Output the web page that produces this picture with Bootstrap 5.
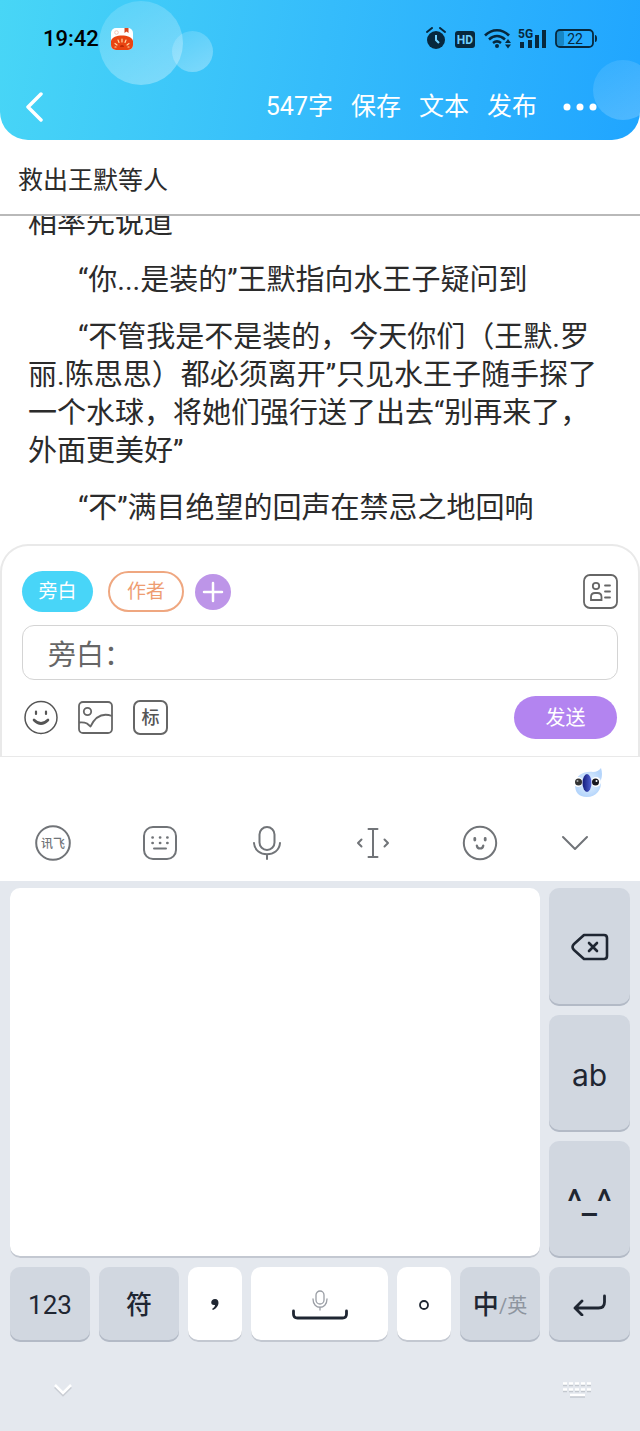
<!DOCTYPE html>
<html lang="zh-CN">
<head>
<meta charset="utf-8">
<meta name="viewport" content="width=device-width, initial-scale=1">
<title>救出王默等人</title>
<link href="https://cdn.jsdelivr.net/npm/bootstrap@5.3.0/dist/css/bootstrap.min.css" rel="stylesheet">
<style>
  body { font-family: Roboto, "Noto Sans CJK SC", sans-serif; color: #2b2b2b; background: #fff; }
  svg { display: block; flex: none; }
  button { padding: 0; border: 0; background: none; color: inherit; }
  .app-header { height: 140px; border-radius: 0 0 28px 28px; background: linear-gradient(100deg, #48d6f6 0%, #35bcfb 50%, #20a5ff 100%); }
  .bubble { position: absolute; border-radius: 50%; background: linear-gradient(150deg, rgba(255,255,255,.12), rgba(255,255,255,.34)); }
  .bubble-lg { width: 84px; height: 84px; left: 99px; top: 1px; }
  .bubble-sm { width: 41px; height: 41px; left: 172px; top: 31px; }
  .bubble-end { width: 60px; height: 60px; right: -13px; top: 60px; background: linear-gradient(150deg, rgba(255,255,255,.08), rgba(255,255,255,.22)); }
  .status-row { height: 78px; padding: 0 42px 0 43px; color: #000; }
  .clock { font-size: 22px; font-weight: 500; line-height: 28px; }
  .nav-row { height: 58px; padding: 0 43px 0 25px; gap: 18px; color: #fff; font-size: 25px; line-height: 36px; }
  .title-input { border: 0; border-bottom: 2px solid #b9b9b9; height: 76px; padding: 2px 19px 0 18px; font-size: 25px; color: #2b2b2b; }
  .story { min-height: 0; padding: 0 28px 17px; font-size: 29px; line-height: 38px; }
  .story p { margin: 19px 0 0; text-indent: 50px; }
  .story .continued { text-indent: 0; }
  .composer { border: 2px solid #e9e9e9; border-bottom-width: 1px; border-radius: 28px 28px 0 0; padding: 25px 20px 17px; }
  .pill { height: 41px; border-radius: 21px; font-size: 19px; line-height: 28px; }
  .pill-narrator { width: 71px; background: #48d5f8; color: #fff; }
  .pill-author { width: 76px; margin: 0 11px 0 15px; border: 2px solid #efa780; color: #ee9d72; }
  .reply { height: 55px; margin-top: 13px; border: 1px solid #d4d4d4; border-radius: 12px; padding: 0 25px; font-size: 28px; color: #666; }
  .composer-tools { gap: 20px; padding: 0 1px; }
  .send { width: 103px; height: 43px; border-radius: 22px; background: #b384f0; color: #fff; font-size: 20px; }
  .tag-btn { width: 35px; height: 35px; border: 2px solid #666; border-radius: 7px; font-size: 18px; line-height: 28px; font-weight: 500; color: #555; }
  .ime-tools { height: 124px; padding-top: 11px; }
  .ime-tools-row { height: 66px; margin-top: 12px; }
  .keyboard { background: #e4e8ee; padding: 7px 10px 0; height: 550px; }
  .keys { display: grid; grid-template-columns: 80fr 80fr 54fr 137fr 54fr 80fr 81fr; grid-template-rows: 118px 117px 117px 75px; gap: 9px; }
  .pad { grid-area: 1 / 1 / 4 / 7; }
  .keycap { background: #d1d7e0; border-radius: 10px; box-shadow: inset 0 -2px 0 #b3bac6; color: #1f2632; display: flex; align-items: center; justify-content: center; min-width: 0; }
  .keycap-light { background: #fff; box-shadow: inset 0 -2px 0 #c3c8d1; }
  .key-text { font-size: 26px; font-weight: 500; padding-top: 2px; }
  .key-num { font-size: 26px; font-weight: 400; }
  .key-latin { font-family: Inter, sans-serif; font-size: 30px; padding-top: 4px; }
  .key-face { font-size: 34px; font-weight: 500; padding-top: 4px; }
  .key-alt { font-size: 20px; font-weight: 400; color: #8e959f; }
  .ime-foot { padding: 39px 38px 0 43px; }
</style>
</head>
<body>
<div class="d-flex flex-column vh-100 overflow-hidden">
  <header class="app-header position-relative overflow-hidden flex-shrink-0">
    <span class="bubble bubble-lg"></span><span class="bubble bubble-sm"></span><span class="bubble bubble-end"></span>
    <div class="status-row d-flex align-items-center position-relative">
      <span class="clock">19:42</span>
      <svg class="ms-2 me-auto" width="26" height="22" viewBox="-4 0 26 22"><rect width="22" height="22" rx="5" fill="#fff"/><path d="M0 13C1 9 6 7.500 11 7.500S21 9 22 13v4a5 5 0 0 1-5 5H5a5 5 0 0 1-5-5z" fill="#e94412"/><path d="M13.500 0h4v5l-2-1.500-2 1.500z" fill="#d8471f"/><circle cx="5.500" cy="4.500" r="1.800" fill="none" stroke="#f3c7b8"/><path d="M11 11v3M7 12l1 2.500M15 12l-1 2.500M4 15.500l2 1.500M18 15.500L16 17M4 19h1M17 19h1" stroke="#ffd9a0" stroke-width="1.200" stroke-linecap="round"/><path d="M9 19a2 2 0 0 1 4 0" fill="#b92b08"/></svg>
      <svg width="172" height="24" viewBox="0 0 172 24">
        <g fill="#07283d">
          <circle cx="10" cy="13" r="9"/><path d="M1 5l5-4M19 5l-5-4" stroke="#07283d" stroke-width="2" stroke-linecap="round"/><path d="M10 8v5l3 3" fill="none" stroke="#6fd0ff" stroke-width="2"/>
          <rect x="29" y="4" width="20" height="17" rx="3"/>
          <text x="39" y="17" font-size="12" font-weight="700" text-anchor="middle" fill="#6fd0ff">HD</text>
          <g fill="none" stroke="#07283d" stroke-width="2.600"><path d="M59 8.500c7-7 17-7 24 0M63 12.500c5-4.500 11-4.500 16 0M67 16c3-2.400 5-2.400 8 0"/></g>
          <circle cx="71" cy="19" r="2"/><path d="M79 16l3-4 3 4zM79 17.500h6l-3 4z"/>
          <text x="92" y="11" font-size="12" font-weight="700">5G</text>
          <path d="M94 15h4v6h-4zM102 13h4v8h-4zM109 8h4v13h-4zM116 3h4v18h-4z"/>
          <rect x="131" y="4" width="7" height="15" rx="2" fill="#1686c6"/>
          <rect x="130" y="3" width="37" height="17" rx="4" fill="none" stroke="#07283d" stroke-width="1.800"/><path d="M169 8q2 0 2 3.500T169 15z"/>
          <text x="149" y="16.500" font-size="14" text-anchor="middle">22</text>
        </g>
      </svg>
    </div>
    <nav class="nav-row d-flex align-items-center position-relative">
      <button type="button" aria-label="返回" class="me-auto"><svg width="20" height="30" viewBox="0 0 20 30"><path d="M16 2L3 15l13 13" fill="none" stroke="#fff" stroke-width="3.500" stroke-linecap="round" stroke-linejoin="round"/></svg></button>
      <span>547字</span><button type="button">保存</button><button type="button">文本</button><button type="button">发布</button>
      <button type="button" aria-label="更多" class="ms-2"><svg width="34" height="8" viewBox="0 0 34 8" fill="#fff"><circle cx="4" cy="4" r="3.500"/><circle cx="17" cy="4" r="3.500"/><circle cx="30" cy="4" r="3.500"/></svg></button>
    </nav>
  </header>

  <input class="title-input w-100 flex-shrink-0" type="text" aria-label="标题" value="救出王默等人">

  <main class="story d-flex flex-column justify-content-end flex-grow-1 overflow-hidden">
    <div>
      <p class="continued">相率先说道</p>
      <p>“你...是装的”王默指向水王子疑问到</p>
      <p>“不管我是不是装的，今天你们（王默.罗丽.陈思思）都必须离开”只见水王子随手探了一个水球，将她们强行送了出去“别再来了，外面更美好”</p>
      <p>“不”满目绝望的回声在禁忌之地回响</p>
    </div>
  </main>

  <section class="composer flex-shrink-0">
    <div class="d-flex align-items-center">
      <button type="button" class="pill pill-narrator">旁白</button>
      <button type="button" class="pill pill-author">作者</button>
      <button type="button" aria-label="添加角色"><svg width="36" height="36" viewBox="0 0 36 36"><circle cx="18" cy="18" r="18" fill="#bd95e8"/><path d="M9 18h18M18 9v18" stroke="#fff" stroke-width="2.500" stroke-linecap="round"/></svg></button>
      <button type="button" aria-label="角色列表" class="ms-auto"><svg width="35" height="35" viewBox="0 0 35 35" fill="none" stroke="#666" stroke-width="1.800"><rect x="1" y="1" width="33" height="33" rx="6"/><circle cx="13" cy="12" r="3.200"/><path d="M8 26v-3q0-4 4-4h2.500q4 0 4 4v3z"/><path d="M22 11.500h5M22 17.500h5M22 23.500h5" stroke-linecap="round"/></svg></button>
    </div>
    <input class="reply w-100 d-block" type="text" aria-label="对白内容" value="旁白：">
    <div class="composer-tools d-flex align-items-center mt-3">
      <button type="button" aria-label="表情"><svg width="35" height="35" viewBox="0 0 35 35" fill="none" stroke="#555" stroke-linecap="round"><circle cx="18" cy="17.500" r="16" stroke-width="1.500"/><path d="M13 11.500v2.500M23 11.500v2.500" stroke-width="2.200"/><path d="M11 20q7 7 14 0" stroke-width="2.600"/></svg></button>
      <button type="button" aria-label="图片"><svg width="35" height="35" viewBox="0 0 35 35" fill="none" stroke="#666" stroke-width="1.800"><rect x="1" y="2" width="33" height="31" rx="4"/><circle cx="9.500" cy="11.500" r="3.700"/><path d="M1 22.500q5-.500 8 1l3.500 3Q20 11 34 16" stroke-linejoin="round"/></svg></button>
      <button type="button" class="tag-btn">标</button>
      <button type="button" class="send ms-auto">发送</button>
    </div>
  </section>

  <section class="ime-tools flex-shrink-0">
    <div class="d-flex justify-content-end px-4 mx-2">
      <svg class="me-1" width="32" height="30" viewBox="0 0 32 30"><defs><radialGradient id="face"><stop stop-color="#e9f5ff"/><stop offset="1" stop-color="#b5d5fb"/></radialGradient><linearGradient id="nose"><stop stop-color="#121a78"/><stop offset="1" stop-color="#4f62d5"/></linearGradient></defs><path d="M3 16C4 7 12 3 21 4q5 0 8-4 2 6 0 12c1 10-5 17-14 17S3 24 3 16z" fill="url(#face)"/><circle cx="6" cy="14" r="5" fill="#fff"/><circle cx="24" cy="14" r="5" fill="#fff"/><circle cx="6.500" cy="14" r="3.500" fill="#333"/><circle cx="23.500" cy="14" r="3.500" fill="#17171f"/><circle cx="5.500" cy="13" r="1" fill="#aaa"/><circle cx="24.500" cy="13" r="1" fill="#fff"/><ellipse cx="15" cy="15" rx="4.500" ry="9" fill="url(#nose)"/></svg>
    </div>
    <div class="ime-tools-row row g-0 align-items-center row-cols-6">
      <button type="button" class="col d-flex justify-content-center" aria-label="输入法"><svg width="36" height="36" viewBox="0 0 36 36"><circle cx="18" cy="18" r="16.800" fill="none" stroke="#717478" stroke-width="2"/><text x="18" y="23" text-anchor="middle" font-size="12" font-weight="500" fill="#717478">讯飞</text></svg></button>
      <button type="button" class="col d-flex justify-content-center" aria-label="键盘"><svg width="36" height="36" viewBox="0 0 36 36" fill="none" stroke="#717478" stroke-width="2" stroke-linecap="round"><rect x="2" y="2" width="32" height="32" rx="9"/><path d="M12 23.500h12"/><path d="M10.500 12.500h.2M18 12.500h.2M25.300 12.500h.2M10.500 18h.2M18 18h.2M25.300 18h.2" stroke-width="2.600"/></svg></button>
      <button type="button" class="col d-flex justify-content-center" aria-label="语音"><svg width="30" height="36" viewBox="0 0 30 36" fill="none" stroke="#717478" stroke-width="2" stroke-linecap="round"><rect x="7.500" y="2" width="15" height="23" rx="7.500"/><path d="M2 18c1 15 25 15 26 0M15 29.500V34"/></svg></button>
      <button type="button" class="col d-flex justify-content-center" aria-label="移动光标"><svg width="34" height="34" viewBox="0 0 34 34" fill="none" stroke="#717478" stroke-width="2" stroke-linecap="round" stroke-linejoin="round"><path d="M12.500 3h9M17 3v28M12.500 31h9M5.500 13.500L2 17l3.500 3.500M28.500 13.500L32 17l-3.500 3.500"/></svg></button>
      <button type="button" class="col d-flex justify-content-center" aria-label="表情符号"><svg width="36" height="36" viewBox="0 0 36 36" fill="none" stroke="#717478" stroke-width="2" stroke-linecap="round"><circle cx="18" cy="18" r="16.200"/><path d="M12.800 13.500v1.500M23.200 13.500v1.500" stroke-width="2.800"/><path d="M14.800 20.500c.5 4 6 4 6.500 0" stroke-width="2.200"/></svg></button>
      <button type="button" class="col d-flex justify-content-center pe-4" aria-label="收起"><svg width="28" height="18" viewBox="0 0 28 18"><path d="M2 3l12 12L26 3" fill="none" stroke="#717478" stroke-width="2" stroke-linecap="round" stroke-linejoin="round"/></svg></button>
    </div>
  </section>

  <section class="keyboard flex-shrink-0">
    <div class="keys">
      <div class="keycap keycap-light pad"></div>
      <button type="button" class="keycap" aria-label="退格"><svg width="38" height="28" viewBox="0 0 38 28" fill="none" stroke="#1f2632" stroke-width="2.600" stroke-linecap="round" stroke-linejoin="round"><path d="M13 2h20q3 0 3 3v18q0 3-3 3H13L3 17q-3-3 0-6z"/><path d="M18 10l8 8M26 10l-8 8"/></svg></button>
      <button type="button" class="keycap key-latin">ab</button>
      <button type="button" class="keycap key-face">^_^</button>
      <button type="button" class="keycap key-text key-num">123</button>
      <button type="button" class="keycap key-text">符</button>
      <button type="button" class="keycap keycap-light" aria-label="逗号"><svg width="10" height="14" viewBox="0 0 10 14"><path d="M5 1c5 0 5 8-2 11l-1-1c2-1 3-3 3-4C0 8 0 1 5 1z" fill="#1f2632"/></svg></button>
      <button type="button" class="keycap keycap-light" aria-label="空格"><svg width="56" height="30" viewBox="0 0 56 30" fill="none" stroke-linecap="round"><g stroke="#9a9ea5" stroke-width="1.300"><rect x="24" y="1" width="8" height="13" rx="4"/><path d="M21 9c0 11 14 11 14 0M28 17v3"/></g><path d="M1.500 21v3q0 4 4 4h45q4 0 4-4v-3" stroke="#1f2632" stroke-width="2.800"/></svg></button>
      <button type="button" class="keycap keycap-light" aria-label="句号"><svg width="12" height="12" viewBox="0 0 12 12"><circle cx="6" cy="6" r="4" fill="none" stroke="#1f2632" stroke-width="1.800"/></svg></button>
      <button type="button" class="keycap key-text">中<span class="key-alt">/英</span></button>
      <button type="button" class="keycap" aria-label="换行"><svg width="34" height="22" viewBox="0 0 34 22" fill="none" stroke="#1f2632" stroke-width="2.800" stroke-linecap="round" stroke-linejoin="round"><path d="M31.500 2v6q0 6-6 6H3M9 7l-7 7 7 7"/></svg></button>
    </div>
    <div class="ime-foot d-flex justify-content-between align-items-center">
      <button type="button" aria-label="隐藏键盘"><svg width="20" height="14" viewBox="0 0 20 14" fill="none" stroke-width="2.500"><path d="M2 4l8 8 8-8" stroke="#c9cdd4"/><path d="M2 2l8 8 8-8" stroke="#fff"/></svg></button>
      <button type="button" aria-label="切换输入法"><svg width="30" height="18" viewBox="0 0 30 18" fill="none" stroke-width="2.500"><path d="M1 4h28M1 10h28" stroke="#c3c8cf" stroke-dasharray="4 2"/><path d="M8 15.500h15" stroke="#c3c8cf"/><path d="M1 2.500h28M1 8.500h28" stroke="#fff" stroke-dasharray="4 2"/><path d="M8 14h15" stroke="#fff"/></svg></button>
    </div>
  </section>
</div>
<script src="https://cdn.jsdelivr.net/npm/bootstrap@5.3.0/dist/js/bootstrap.bundle.min.js"></script>
</body>
</html>
